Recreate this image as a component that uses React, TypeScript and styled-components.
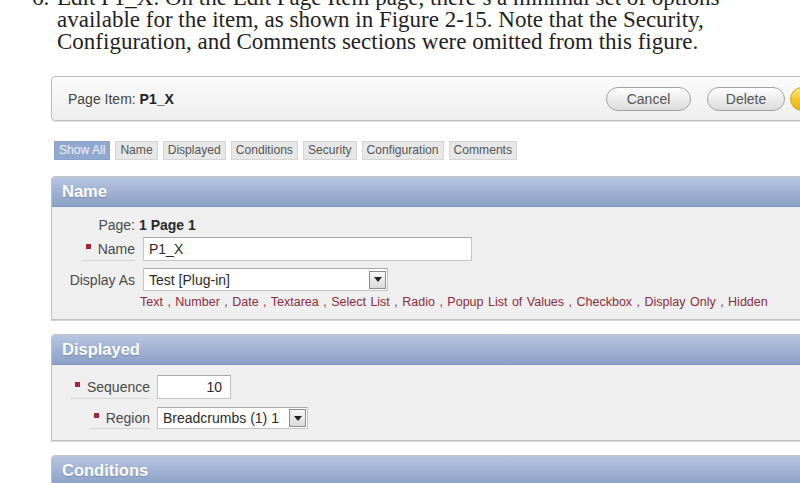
import React from "react";
import styled, { createGlobalStyle } from "styled-components";

const GlobalStyle = createGlobalStyle`
  html, body {
    margin: 0;
    padding: 0;
    background: #ffffff;
    overflow: hidden;
  }
  body {
    font-family: "Liberation Sans", Arial, Helvetica, sans-serif;
  }
`;

const Page = styled.div`
  width: 800px;
  height: 483px;
  overflow: hidden;
`;

/* ---- book text above the screen ---- */

const Step = styled.div`
  display: flex;
  margin-top: -13px;
  font-family: "Liberation Serif", "Times New Roman", serif;
  font-size: 23px;
  line-height: 22px;
  color: #1f1f1f;
`;

const StepNum = styled.span`
  box-sizing: border-box;
  width: 57px;
  padding-left: 32px;
`;

const StepLine = styled.span`
  display: block;
  white-space: nowrap;
`;

/* ---- the edit page ---- */

const Screen = styled.div`
  padding: 23px 0 0 51px;
  width: 870px;
`;

const TitleBar = styled.div`
  box-sizing: border-box;
  height: 45px;
  display: flex;
  align-items: center;
  padding: 0 10px 0 16px;
  border: 1px solid #bdbdbd;
  border-radius: 4px;
  background: linear-gradient(#fbfbfb, #eeeeee);
  box-shadow: 0 1px 1px rgba(0, 0, 0, 0.12);
`;

const Title = styled.div`
  font-size: 14px;
  color: #444;
  b {
    color: #222;
  }
`;

const ButtonBar = styled.div`
  margin-left: auto;
  display: flex;
  align-items: center;
`;

const PillButton = styled.button<{ $w: number; $ml?: number; $hot?: boolean }>`
  box-sizing: border-box;
  width: ${(p) => p.$w}px;
  height: 24px;
  margin-left: ${(p) => p.$ml ?? 0}px;
  padding: 0;
  border-radius: 12px;
  border: 1px solid ${(p) => (p.$hot ? "#d2a21a" : "#a2a2a2")};
  background: ${(p) =>
    p.$hot
      ? "linear-gradient(#ffe98a, #f5c526 55%, #eab414)"
      : "linear-gradient(#ffffff, #e9e9e9 60%, #dcdcdc)"};
  font-family: inherit;
  font-size: 14px;
  color: ${(p) => (p.$hot ? "#4a3a00" : "#555")};
`;

const TabStrip = styled.div`
  display: flex;
  gap: 5px;
  margin: 20px 0 0 3px;
`;

const Tab = styled.div<{ $active?: boolean }>`
  box-sizing: border-box;
  height: 19px;
  padding: 0 4px;
  border: 1px solid ${(p) => (p.$active ? "#8ba1c9" : "#d5d5d5")};
  background: ${(p) => (p.$active ? "#92a8cf" : "#e7e7e7")};
  color: ${(p) => (p.$active ? "#eef2fa" : "#555")};
  font-size: 12.1px;
  line-height: 17px;
  white-space: nowrap;
`;

const Section = styled.section<{ $mt: number }>`
  margin-top: ${(p) => p.$mt}px;
  border: 1px solid #c2c2c2;
  border-radius: 4px 4px 0 0;
  background: #efefef;
  box-shadow: 0 1px 0 #d6d6d6;
  overflow: hidden;
`;

const SectionHead = styled.div`
  box-sizing: border-box;
  height: 30px;
  display: flex;
  align-items: center;
  padding-left: 10px;
  background: linear-gradient(#b7c5e0, #8ba0c6);
  border-bottom: 1px solid #8096bd;
  color: #ffffff;
  font-size: 16.5px;
  font-weight: bold;
  text-shadow: 0 1px 1px rgba(60, 80, 120, 0.35);
`;

const SectionBody = styled.div<{ $h: number; $pt: number }>`
  height: ${(p) => p.$h}px;
  padding-top: ${(p) => p.$pt}px;
  box-sizing: border-box;
  display: flex;
  flex-direction: column;
`;

const Row = styled.div<{ $label: number; $gap: number; $h: number; $mt?: number }>`
  display: grid;
  grid-template-columns: ${(p) => p.$label}px auto;
  column-gap: ${(p) => p.$gap}px;
  height: ${(p) => p.$h}px;
  margin-top: ${(p) => p.$mt ?? 0}px;
  align-items: center;
`;

const Label = styled.div<{ $req?: boolean }>`
  justify-self: end;
  align-self: stretch;
  box-sizing: border-box;
  display: flex;
  align-items: center;
  gap: 7px;
  padding-left: ${(p) => (p.$req ? 4 : 0)}px;
  border-bottom: ${(p) => (p.$req ? "1px solid #d5d5d5" : "none")};
  font-size: 14px;
  color: #4a4a4a;
  white-space: nowrap;
`;

const Bullet = styled.span`
  width: 5px;
  height: 5px;
  margin-top: -4px;
  background: #a3263a;
`;

const Value = styled.div`
  font-size: 14px;
  font-weight: bold;
  color: #2a2a2a;
`;

const Field = styled.div<{ $w: number; $h: number; $right?: boolean }>`
  box-sizing: border-box;
  width: ${(p) => p.$w}px;
  height: ${(p) => p.$h}px;
  display: flex;
  align-items: center;
  justify-content: ${(p) => (p.$right ? "flex-end" : "flex-start")};
  padding: 0 ${(p) => (p.$right ? 8 : 5)}px 0 5px;
  border: 1px solid #c4c4c4;
  border-top-color: #a8a8a8;
  background: #ffffff;
  font-size: 14px;
  color: #2a2a2a;
  white-space: nowrap;
`;

const SelectBox = styled(Field)`
  padding-right: 1px;
  span {
    flex: 1;
  }
`;

const ArrowButton = styled.div`
  box-sizing: border-box;
  width: 17px;
  height: 18px;
  display: flex;
  align-items: center;
  justify-content: center;
  border: 1px solid #8c8c8c;
  background: linear-gradient(#f8f8f8, #d9d9d9);
`;

const LinkList = styled.div`
  margin-left: -3px;
  font-size: 12.5px;
  word-spacing: 1px;
  color: #8a2d3e;
  white-space: nowrap;
`;

const Select = ({ w, h, value }: { w: number; h: number; value: string }) => (
  <SelectBox $w={w} $h={h}>
    <span>{value}</span>
    <ArrowButton>
      <svg width="8" height="5" viewBox="0 0 8 5">
        <path d="M0 0h8L4 5z" fill="#222" />
      </svg>
    </ArrowButton>
  </SelectBox>
);

const tabs = ["Show All", "Name", "Displayed", "Conditions", "Security", "Configuration", "Comments"];

const displayTypes = [
  "Text",
  "Number",
  "Date",
  "Textarea",
  "Select List",
  "Radio",
  "Popup List of Values",
  "Checkbox",
  "Display Only",
  "Hidden",
];

export default function App() {
  return (
    <Page>
      <GlobalStyle />
      <Step>
        <StepNum>6.</StepNum>
        <div>
          <StepLine>Edit P1_X. On the Edit Page Item page, there’s a minimal set of options</StepLine>
          <StepLine>available for the item, as shown in Figure 2-15. Note that the Security,</StepLine>
          <StepLine>Configuration, and Comments sections were omitted from this figure.</StepLine>
        </div>
      </Step>

      <Screen>
        <TitleBar>
          <Title>
            Page Item: <b>P1_X</b>
          </Title>
          <ButtonBar>
            <PillButton $w={85}>Cancel</PillButton>
            <PillButton $w={78} $ml={16}>Delete</PillButton>
            <PillButton $w={120} $ml={5} $hot>Apply Changes</PillButton>
          </ButtonBar>
        </TitleBar>

        <TabStrip>
          {tabs.map((t, i) => (
            <Tab key={t} $active={i === 0}>
              {t}
            </Tab>
          ))}
        </TabStrip>

        <Section $mt={16}>
          <SectionHead>Name</SectionHead>
          <SectionBody $h={112} $pt={7}>
            <Row $label={83} $gap={4} $h={22}>
              <Label>Page:</Label>
              <Value>1 Page 1</Value>
            </Row>
            <Row $label={83} $gap={8} $h={24} $mt={1}>
              <Label $req>
                <Bullet />
                Name
              </Label>
              <Field $w={329} $h={24}>P1_X</Field>
            </Row>
            <Row $label={83} $gap={8} $h={23} $mt={7}>
              <Label>Display As</Label>
              <Select w={245} h={23} value="Test [Plug-in]" />
            </Row>
            <Row $label={83} $gap={8} $h={17} $mt={2}>
              <span />
              <LinkList>{displayTypes.join(" , ")}</LinkList>
            </Row>
          </SectionBody>
        </Section>

        <Section $mt={14}>
          <SectionHead>Displayed</SectionHead>
          <SectionBody $h={75} $pt={10}>
            <Row $label={98} $gap={7} $h={24}>
              <Label $req>
                <Bullet />
                Sequence
              </Label>
              <Field $w={74} $h={24} $right>10</Field>
            </Row>
            <Row $label={98} $gap={7} $h={22} $mt={8}>
              <Label $req>
                <Bullet />
                Region
              </Label>
              <Select w={151} h={22} value="Breadcrumbs (1) 1" />
            </Row>
          </SectionBody>
        </Section>

        <Section $mt={14}>
          <SectionHead>Conditions</SectionHead>
          <SectionBody $h={60} $pt={0} />
        </Section>
      </Screen>
    </Page>
  );
}
